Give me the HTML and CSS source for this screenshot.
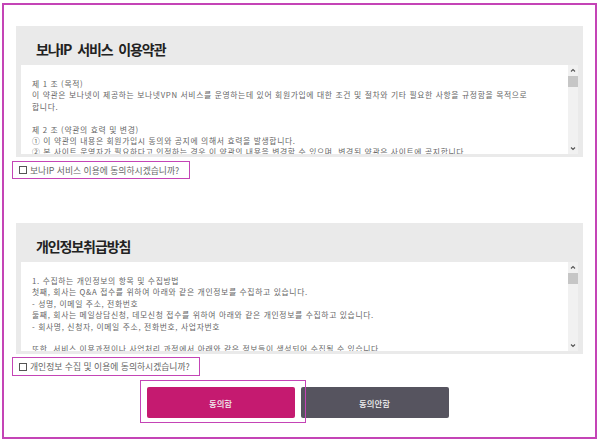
FILE: index.html
```html
<!DOCTYPE html>
<html lang="ko">
<head>
<meta charset="utf-8">
<link rel="stylesheet" href="styles.css">
</head>
<body>
<div class="frame">
  <section class="panel">
    <h2 class="panel-title">보나IP 서비스 이용약관</h2>
    <div class="box">
      <div class="box-text">제 1 조 (목적)<br>이 약관은 보나넷이 제공하는 보나넷VPN 서비스를 운영하는데 있어 회원가입에 대한 조건 및 절차와 기타 필요한 사항을 규정함을 목적으로<br>합니다.<br><br>제 2 조 (약관의 효력 및 변경)<br>① 이 약관의 내용은 회원가입시 동의와 공지에 의해서 효력을 발생합니다.<br>② 본 사이트 운영자가 필요하다고 인정하는 경우 이 약관의 내용을 변경할 수 있으며, 변경된 약관은 사이트에 공지합니다.</div>
      <div class="scrollbar">
        <svg class="arrow" viewBox="0 0 10 10"><polyline points="3,6 5,4 7,6" /></svg>
        <span class="thumb"></span>
        <span class="track"></span>
        <svg class="arrow" viewBox="0 0 10 10"><polyline points="3,4 5,6 7,4" /></svg>
      </div>
    </div>
  </section>
  <label class="agree agree-first"><span class="check"></span>보나IP 서비스 이용에 동의하시겠습니까?</label>

  <section class="panel panel-second">
    <h2 class="panel-title">개인정보취급방침</h2>
    <div class="box">
      <div class="box-text">1. 수집하는 개인정보의 항목 및 수집방법<br>첫째, 회사는 Q&amp;A 접수를 위하여 아래와 같은 개인정보를 수집하고 있습니다.<br>- 성명, 이메일 주소, 전화번호<br>둘째, 회사는 메일상담신청, 데모신청 접수를 위하여 아래와 같은 개인정보를 수집하고 있습니다.<br>- 회사명, 신청자, 이메일 주소, 전화번호, 사업자번호<br><br>또한, 서비스 이용과정이나 사업처리 과정에서 아래와 같은 정보들이 생성되어 수집될 수 있습니다.</div>
      <div class="scrollbar">
        <svg class="arrow" viewBox="0 0 10 10"><polyline points="3,6 5,4 7,6" /></svg>
        <span class="thumb"></span>
        <span class="track"></span>
        <svg class="arrow" viewBox="0 0 10 10"><polyline points="3,4 5,6 7,4" /></svg>
      </div>
    </div>
  </section>
  <label class="agree agree-second"><span class="check"></span>개인정보 수집 및 이용에 동의하시겠습니까?</label>

  <div class="actions">
    <button class="btn btn-agree" type="button">동의함</button>
    <button class="btn btn-cancel" type="button">동의안함</button>
  </div>
</div>
</body>
</html>
```
FILE: styles.css
```css
* { box-sizing: border-box; }
html, body { margin: 0; padding: 0; background: #fff; }
body {
  font-family: "Noto Sans CJK KR", "Noto Sans", sans-serif;
  width: 600px;
  height: 439px;
  overflow: hidden;
}
.frame {
  margin: 3px 0 0 2px;
  width: 595px;
  height: 436px;
  border: 2px solid #c444b6;
  padding: 21px 12px 0 8px;
  display: flex;
  flex-direction: column;
}
.panel {
  margin-left: 4px;
  background: #eaeaea;
  padding: 0 5px 3px 5px;
}
.panel-second { margin-top: 44px; }
.panel-title {
  margin: 0;
  height: 39px;
  padding: 13px 0 0 15px;
  font-size: 14px;
  line-height: 20px;
  letter-spacing: -1.1px;
  word-spacing: 3px;
  font-weight: 700;
  color: #222;
}
.box {
  display: flex;
  height: 89px;
  background: #fff;
}
.box-text {
  flex: 1;
  overflow: hidden;
  white-space: nowrap;
  padding: 13px 10px 0 11px;
  font-size: 7.8px;
  letter-spacing: 0.65px;
  line-height: 11.4px;
  color: #666;
}
.scrollbar {
  width: 10px;
  background: #f1f1f1;
  display: flex;
  flex-direction: column;
}
.arrow {
  width: 10px;
  height: 11px;
  fill: none;
  stroke: #555;
  stroke-width: 1.1;
}
.thumb {
  height: 11px;
  background: #c6c6c6;
}
.track { flex: 1; }
.agree {
  align-self: flex-start;
  display: flex;
  align-items: center;
  height: 18px;
  margin-top: 4px;
  padding: 0 10px 0 6px;
  border: 1px solid #c444b6;
  font-size: 8.8px;
  color: #666;
}
.agree-second { margin-top: 3px; height: 19px; padding-right: 9px; }
.check {
  width: 8px;
  height: 8px;
  border: 1px solid #555;
  margin-right: 3px;
  background: #fff;
}
.actions {
  display: flex;
  justify-content: center;
  gap: 6px;
  margin-top: 11px;
}
.btn {
  width: 148px;
  height: 31px;
  border: none;
  border-radius: 2px;
  font-family: "Noto Sans CJK KR", "Noto Sans", sans-serif;
  font-size: 8.4px;
  font-weight: 500;
  color: #f2f2f2;
  padding: 0;
}
.btn-agree {
  position: relative;
  background: #c51a70;
}
.btn-agree::after {
  content: "";
  position: absolute;
  left: -7px;
  top: -7px;
  right: -11px;
  bottom: -5px;
  border: 1px solid #c444b6;
  pointer-events: none;
}
.btn-cancel { background: #56545f; }
```
